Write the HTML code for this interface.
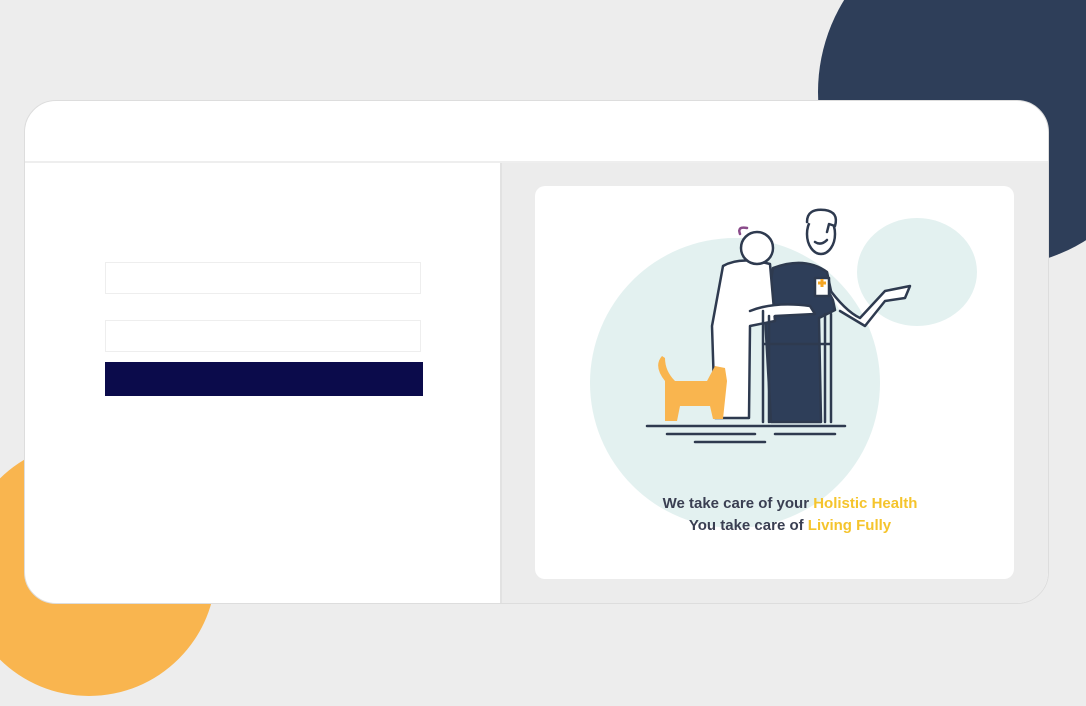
<!DOCTYPE html>
<html><head><style>
html,body{margin:0;padding:0;width:1086px;height:706px;overflow:hidden;background:#ededed;font-family:"Liberation Sans",sans-serif;position:relative}
.c{position:absolute;border-radius:50%}
.card{position:absolute;left:24px;top:100px;width:1023px;height:502px;background:#fff;border:1px solid #ddd;border-radius:32px;overflow:hidden}
.hdr{position:absolute;left:0;top:0;width:100%;height:60px;border-bottom:2px solid #eee}
.right{position:absolute;left:475px;top:62px;right:0;bottom:0;background:#ececec;border-left:2px solid #e2e2e2}
.inner{position:absolute;left:33px;top:23px;width:479px;height:393px;background:#fff;border-radius:10px}
.in{position:absolute;left:80px;width:314px;height:30px;border:1px solid #eee;background:#fff}
.btn{position:absolute;left:80px;top:261px;width:318px;height:34px;background:#0b0b4b}
.t{position:absolute;left:0;width:479px;text-align:center;font-weight:bold;font-size:15px;color:#3a3f52}
.y{color:#f5c42c}
</style></head><body>
<div class="c" style="left:818px;top:-83px;width:350px;height:350px;background:#2e3e59"></div>
<div class="c" style="left:-38px;top:442px;width:254px;height:254px;background:#f9b54f"></div>
<div class="card">
<div class="hdr"></div>
<div class="in" style="top:161px"></div>
<div class="in" style="top:219px"></div>
<div class="btn"></div>
<div class="right"><div class="inner">
<svg width="479" height="393" style="position:absolute;left:0;top:0">
<circle cx="200" cy="197" r="145" fill="#e3f1f0"/>
<ellipse cx="382" cy="86" rx="60" ry="54" fill="#e3f1f0"/>
<g stroke="#2e3a4f" stroke-width="2.5" fill="none" stroke-linecap="round" stroke-linejoin="round">
<path d="M238 82 Q270 70 292 86 L300 124 L284 132 L286 236 L236 236 L230 130 Z" fill="#2e3e59"/>
<path d="M292 100 Q310 125 325 132 L350 105 L375 100 L370 112 L350 115 L330 140 L305 125" fill="#fff"/>
<ellipse cx="286" cy="48" rx="14" ry="20" fill="#fff"/>
<path d="M272 36 Q272 22 290 24 Q304 26 300 40 L294 38 L292 46" fill="#fff"/>
<path d="M280 56 Q286 60 292 54"/>
<rect x="280" y="92" width="14" height="18" fill="#fff"/>
<path d="M188 80 Q205 70 235 78 L240 135 L215 140 L214 232 L180 232 L177 140 Z" fill="#fff"/>
<circle cx="222" cy="62" r="16" fill="#fff"/>
<path d="M205 48 Q202 40 212 42" stroke="#8a4b8a"/>
<path d="M215 125 Q240 115 275 120 L280 128 L240 130" fill="#fff"/>
<path d="M228 125 L228 236 M234 130 L234 236 M290 128 L290 236 M296 128 L296 236 M228 158 L296 158"/>
<path d="M112 240 L310 240 M132 248 L220 248 M240 248 L300 248 M160 256 L230 256"/>
</g>
<path d="M283 97 h8 M287 93 v8" stroke="#f5a623" stroke-width="3"/>
<path d="M127 170 Q118 180 130 195 L130 235 L142 235 L145 220 L175 220 L178 233 L188 233 L192 195 L190 182 L180 180 L172 195 L140 195 Q130 185 130 172 Z" fill="#f9b54f"/>
</svg>
<div class="t" style="top:309px"><span style="margin-left:31px">We take care of your <span class="y">Holistic Health</span></span></div>
<div class="t" style="top:331px"><span style="margin-left:31px">You take care of <span class="y">Living Fully</span></span></div>
</div></div>
</div>
</body></html>
